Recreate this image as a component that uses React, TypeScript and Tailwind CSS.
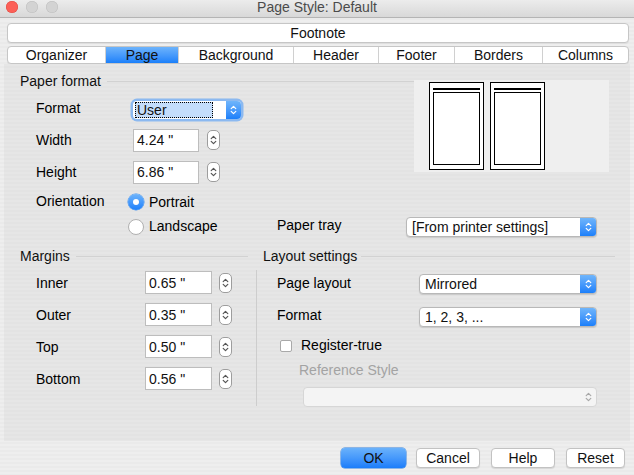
import React from "react";

const Chevrons = ({ color = "#fff", w = 7, h = 12 }: { color?: string; w?: number; h?: number }) => (
  <svg width={w} height={h} viewBox="0 0 7 12" fill="none">
    <path d="M1.2 4.6 L3.5 2.3 L5.8 4.6" stroke={color} strokeWidth="1.2" strokeLinecap="round" strokeLinejoin="round" />
    <path d="M1.2 7.4 L3.5 9.7 L5.8 7.4" stroke={color} strokeWidth="1.2" strokeLinecap="round" strokeLinejoin="round" />
  </svg>
);

const Spinner = () => (
  <div className="flex h-[20px] w-[13px] items-center justify-center rounded-[5px] border border-[#9d9d9d] bg-white">
    <Chevrons color="#555" w={7} h={12} />
  </div>
);

const NumField = ({ value, w }: { value: string; w: string }) => (
  <div className={`flex h-[23px] ${w} items-center border border-[#bdbdbd] bg-white pl-[3px] text-[#111]`}>{value}</div>
);

const Select = ({ value, w, disabled }: { value: string; w: string; disabled?: boolean }) => (
  <div
    className={`flex h-[20px] ${w} overflow-hidden rounded-[4px] border ${
      disabled ? "border-[#d6d6d6] bg-[#f4f4f4]" : "border-[#b8b8b8] bg-white shadow-[0_1px_1px_rgba(0,0,0,0.12)]"
    }`}
  >
    <div className="flex flex-1 items-center pl-[5px] text-[#111]">{value}</div>
    {disabled ? (
      <div className="flex w-[16px] items-center justify-center">
        <Chevrons color="#a8a8a8" />
      </div>
    ) : (
      <div className="flex w-[16px] items-center justify-center bg-gradient-to-b from-[#6fb5fb] to-[#1a7ffa]">
        <Chevrons />
      </div>
    )}
  </div>
);

const SectionHeader = ({ title, lineClass }: { title: string; lineClass: string }) => (
  <div className="flex h-[16px] items-center">
    <span className="text-[#111]">{title}</span>
    <div className={`h-px bg-[#d2d2d2] ${lineClass}`} />
  </div>
);

const Page = () => (
  <div className="flex h-[88px] w-[55px] flex-col border border-black bg-white px-[3px] pt-[5px]">
    <div className="h-[2px] w-full bg-black" />
    <div className="mt-[2px] h-[73px] w-full border border-black" />
  </div>
);

const Radio = ({ checked }: { checked?: boolean }) =>
  checked ? (
    <div className="flex h-[16px] w-[16px] items-center justify-center rounded-full bg-gradient-to-b from-[#6cb3fb] to-[#1b80fb] shadow-[0_0_0_0.5px_#3a8ff0]">
      <div className="h-[6px] w-[6px] rounded-full bg-white" />
    </div>
  ) : (
    <div className="h-[16px] w-[16px] rounded-full border border-[#b0b0b0] bg-white" />
  );

const Btn = ({ label, w, primary }: { label: string; w: string; primary?: boolean }) => (
  <div
    className={`flex h-[20px] ${w} items-center justify-center rounded-[4px] ${
      primary
        ? "bg-gradient-to-b from-[#6ab2fb] to-[#1a7dfa] shadow-[0_0_0_0.5px_#2d7fe0]"
        : "border border-[#c2c2c2] bg-white shadow-[0_1px_1px_rgba(0,0,0,0.1)]"
    } text-[#111]`}
  >
    {label}
  </div>
);

export default function App() {
  const tabs: [string, string][] = [
    ["Organizer", "w-[97px]"],
    ["Page", "w-[73px]"],
    ["Background", "w-[115px]"],
    ["Header", "w-[85px]"],
    ["Footer", "w-[76px]"],
    ["Borders", "w-[88px]"],
    ["Columns", "flex-1"],
  ];
  const margins: [string, string][] = [
    ["Inner", "0.65 \""],
    ["Outer", "0.35 \""],
    ["Top", "0.50 \""],
    ["Bottom", "0.56 \""],
  ];
  return (
    <div className="h-[475px] w-[634px] overflow-hidden bg-[repeating-linear-gradient(180deg,#eeeeee_0px,#eeeeee_2px,#eaeaea_2px,#eaeaea_4px)] font-['Liberation_Sans',Arial,sans-serif] text-[14px] leading-[16px]">
      {/* title bar */}
      <div className="relative flex h-[18px] items-center justify-center border-b border-[#b4b4b4] bg-gradient-to-b from-[#ececec] to-[#d8d8d8]">
        <div className="absolute left-[6px] top-[1px] flex gap-[8px]">
          <div className="h-[12px] w-[12px] rounded-full bg-[#fc5f57] shadow-[inset_0_0_0_0.5px_#de4a41]" />
          <div className="h-[12px] w-[12px] rounded-full bg-[#d3d3d3] shadow-[inset_0_0_0_0.5px_#bdbdbd]" />
          <div className="h-[12px] w-[12px] rounded-full bg-[#d3d3d3] shadow-[inset_0_0_0_0.5px_#bdbdbd]" />
        </div>
        <span className="-mt-[3px] text-[#4b4b4b]">Page Style: Default</span>
      </div>

      {/* footnote row */}
      <div className="mx-[7px] mt-[5px] flex h-[20px] w-[622px] items-center justify-center rounded-[4px] border border-[#c6c6c6] bg-white text-[#111] shadow-[0_1px_1px_rgba(0,0,0,0.06)]">
        Footnote
      </div>

      {/* tabs row */}
      <div className="mx-[7px] mt-[3px] flex h-[18px] w-[622px] overflow-hidden rounded-[4px] border border-[#c6c6c6] bg-white shadow-[0_1px_1px_rgba(0,0,0,0.06)]">
        {tabs.map(([t, w], i) => (
          <div
            key={t}
            className={`flex ${w} items-center justify-center ${i > 0 ? "border-l border-[#d0d0d0]" : ""} ${
              t === "Page" ? "bg-gradient-to-b from-[#6cb3fb] to-[#1a80fa]" : ""
            } text-[#111]`}
          >
            {t}
          </div>
        ))}
      </div>

      {/* panel */}
      <div className="mx-[4px] flex h-[377px] w-[626px] flex-col bg-[repeating-linear-gradient(180deg,#e6e6e6_0px,#e6e6e6_2px,#e3e3e3_2px,#e3e3e3_4px)] pl-[16px] pt-[9px]">
        {/* top section */}
        <div className="flex">
          <div className="flex w-[394px] flex-col">
            <SectionHeader title="Paper format" lineClass="ml-[6px] flex-1" />
            <div className="mt-[10px] flex h-[22px] items-center pl-[16px]">
              <span className="w-[97px] -mt-[4px]">Format</span>
              <div className="flex h-[18px] w-[108px] overflow-hidden rounded-[4px] bg-white shadow-[0_0_0_2.5px_#8cb9f0]">
                <div className="flex flex-1 items-center py-[1px] pl-[2px] pr-[13px]">
                  <div className="flex h-full flex-1 items-center border border-dotted border-black bg-[#c4ddfb] pl-[1px] text-[#111]">User</div>
                </div>
                <div className="flex w-[15px] items-center justify-center bg-gradient-to-b from-[#6fb5fb] to-[#1a7ffa]">
                  <Chevrons />
                </div>
              </div>
            </div>
            <div className="mt-[7px] flex h-[24px] items-center pl-[16px]">
              <span className="w-[97px]">Width</span>
              <NumField value={'4.24 "'} w="w-[66px]" />
              <div className="ml-[8px]"><Spinner /></div>
            </div>
            <div className="mt-[8px] flex h-[24px] items-center pl-[16px]">
              <span className="w-[97px]">Height</span>
              <NumField value={'6.86 "'} w="w-[66px]" />
              <div className="ml-[8px]"><Spinner /></div>
            </div>
            <div className="mt-[9px] flex h-[18px] items-center pl-[16px]">
              <span className="w-[92px] -mt-[2px]">Orientation</span>
              <Radio checked />
              <span className="ml-[5px]">Portrait</span>
            </div>
          </div>
          <div className="mt-[7px] flex h-[92px] w-[195px] gap-[6px] bg-[#efefef] pl-[15px] pt-[2px]">
            <Page />
            <Page />
          </div>
        </div>

        {/* landscape / paper tray */}
        <div className="mt-[6px] flex h-[20px] items-center pl-[108px]">
          <div className="flex w-[149px] items-center">
            <Radio />
            <span className="ml-[5px] -mt-[2px]">Landscape</span>
          </div>
          <span className="w-[129px] -mt-[4px]">Paper tray</span>
          <Select value="[From printer settings]" w="w-[191px]" />
        </div>

        {/* bottom sections */}
        <div className="mt-[11px] flex">
          <div className="flex w-[236px] flex-col">
            <SectionHeader title="Margins" lineClass="ml-[6px] mr-[8px] flex-1" />
            <div className="mt-[7px] flex flex-col gap-[9px]">
              {margins.map(([l, v]) => (
                <div key={l} className="flex h-[23px] items-center pl-[16px]">
                  <span className="w-[109px]">{l}</span>
                  <NumField value={v} w="w-[67px]" />
                  <div className="ml-[7px]"><Spinner /></div>
                </div>
              ))}
            </div>
          </div>
          <div className="flex w-[359px] flex-col">
            <div className="pl-[7px]">
              <SectionHeader title="Layout settings" lineClass="ml-[4px] flex-1" />
            </div>
            <div className="mt-[6px] flex h-[136px] flex-col border-l border-[#cdcdcd] pl-[20px] pt-[4px]">
              <div className="flex h-[20px] items-center">
                <span className="w-[142px] -mt-[3px]">Page layout</span>
                <Select value="Mirrored" w="w-[178px]" />
              </div>
              <div className="mt-[13px] flex h-[20px] items-center">
                <span className="w-[142px] -mt-[5px]">Format</span>
                <Select value="1, 2, 3, ..." w="w-[178px]" />
              </div>
              <div className="mt-[13px] flex h-[12px] items-center pl-[3px]">
                <div className="h-[12px] w-[12px] rounded-[2px] border border-[#a9a9a9] bg-white" />
                <span className="ml-[9px] -mt-[3px]">Register-true</span>
              </div>
              <div className="mt-[10px] h-[16px] pl-[22px] text-[#a3a3a3]">Reference Style</div>
              <div className="mt-[9px] pl-[26px]">
                <Select value="" w="w-[294px]" disabled />
              </div>
            </div>
          </div>
        </div>
      </div>

      {/* buttons */}
      <div className="mt-[7px] flex justify-end pr-[9px]">
        <Btn label="OK" w="w-[65px]" primary />
        <div className="ml-[10px]"><Btn label="Cancel" w="w-[64px]" /></div>
        <div className="ml-[11px]"><Btn label="Help" w="w-[64px]" /></div>
        <div className="ml-[11px]"><Btn label="Reset" w="w-[59px]" /></div>
      </div>
    </div>
  );
}
